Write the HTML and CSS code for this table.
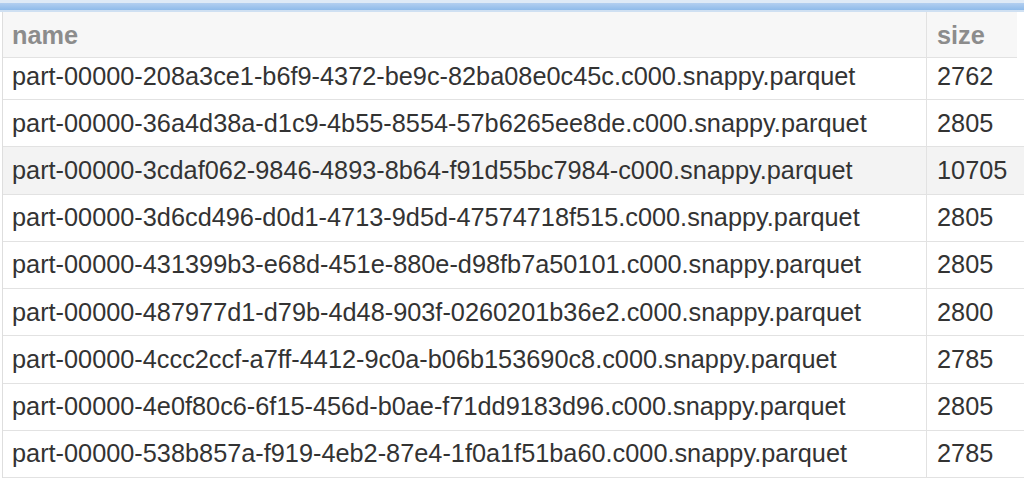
FILE: index.html
```html
<!DOCTYPE html>
<html>
<head>
    <meta charset="UTF-8">
    <title>Files</title>
    <link rel="stylesheet" href="styles.css">
</head>
<body>
    <div class="topbar"></div>
    <div class="sheet">
        <div class="row head">
            <div class="cell">name</div>
            <div class="cell">size</div>
        </div>
        <div class="rows">
            <div class="row cut">
                <div class="cell">part-00000-208a3ce1-b6f9-4372-be9c-82ba08e0c45c.c000.snappy.parquet</div>
                <div class="cell">2762</div>
            </div>
            <div class="row">
                <div class="cell">part-00000-36a4d38a-d1c9-4b55-8554-57b6265ee8de.c000.snappy.parquet</div>
                <div class="cell">2805</div>
            </div>
            <div class="row hover">
                <div class="cell">part-00000-3cdaf062-9846-4893-8b64-f91d55bc7984-c000.snappy.parquet</div>
                <div class="cell">10705</div>
            </div>
            <div class="row">
                <div class="cell">part-00000-3d6cd496-d0d1-4713-9d5d-47574718f515.c000.snappy.parquet</div>
                <div class="cell">2805</div>
            </div>
            <div class="row">
                <div class="cell">part-00000-431399b3-e68d-451e-880e-d98fb7a50101.c000.snappy.parquet</div>
                <div class="cell">2805</div>
            </div>
            <div class="row">
                <div class="cell">part-00000-487977d1-d79b-4d48-903f-0260201b36e2.c000.snappy.parquet</div>
                <div class="cell">2800</div>
            </div>
            <div class="row">
                <div class="cell">part-00000-4ccc2ccf-a7ff-4412-9c0a-b06b153690c8.c000.snappy.parquet</div>
                <div class="cell">2785</div>
            </div>
            <div class="row">
                <div class="cell">part-00000-4e0f80c6-6f15-456d-b0ae-f71dd9183d96.c000.snappy.parquet</div>
                <div class="cell">2805</div>
            </div>
            <div class="row">
                <div class="cell">part-00000-538b857a-f919-4eb2-87e4-1f0a1f51ba60.c000.snappy.parquet</div>
                <div class="cell">2785</div>
            </div>
        </div>
    </div>
</body>
</html>
```

FILE: styles.css
```css
body {
    margin: 0;
    padding: 0;
    background-color: #fff;
    font-family: "Liberation Sans", Arial, sans-serif;
    font-size: 25.3px;
    color: #333;
    overflow: hidden;
}
.topbar {
    height: 12px;
    background: linear-gradient(#dfeaf6 0, #dfeaf6 3px, #b3cff0 3px, #8fbbea 10px, #cfe0f2 10px);
}
.sheet {
    margin-left: 2px;
    border-left: 1px solid #dedede;
}
.row {
    display: grid;
    grid-template-columns: 924px 1fr;
    height: 47.25px;
    box-sizing: border-box;
    border-bottom: 1px solid #e2e2e2;
}
.row .cell {
    display: flex;
    align-items: center;
    padding-left: 9px;
    white-space: nowrap;
    border-right: 1px solid #e2e2e2;
}
.row .cell + .cell {
    padding-left: 10px;
    border-right: none;
}
.head {
    height: 46px;
    margin-right: 7px;
    background-color: #f7f7f7;
    font-weight: bold;
    color: #8c8c8c;
}
.head .cell {
    padding-top: 1px;
}
.cut {
    height: 42px;
}
.cut .cell {
    padding-bottom: 5px;
}
.hover {
    background-color: #f3f3f3;
}
```
